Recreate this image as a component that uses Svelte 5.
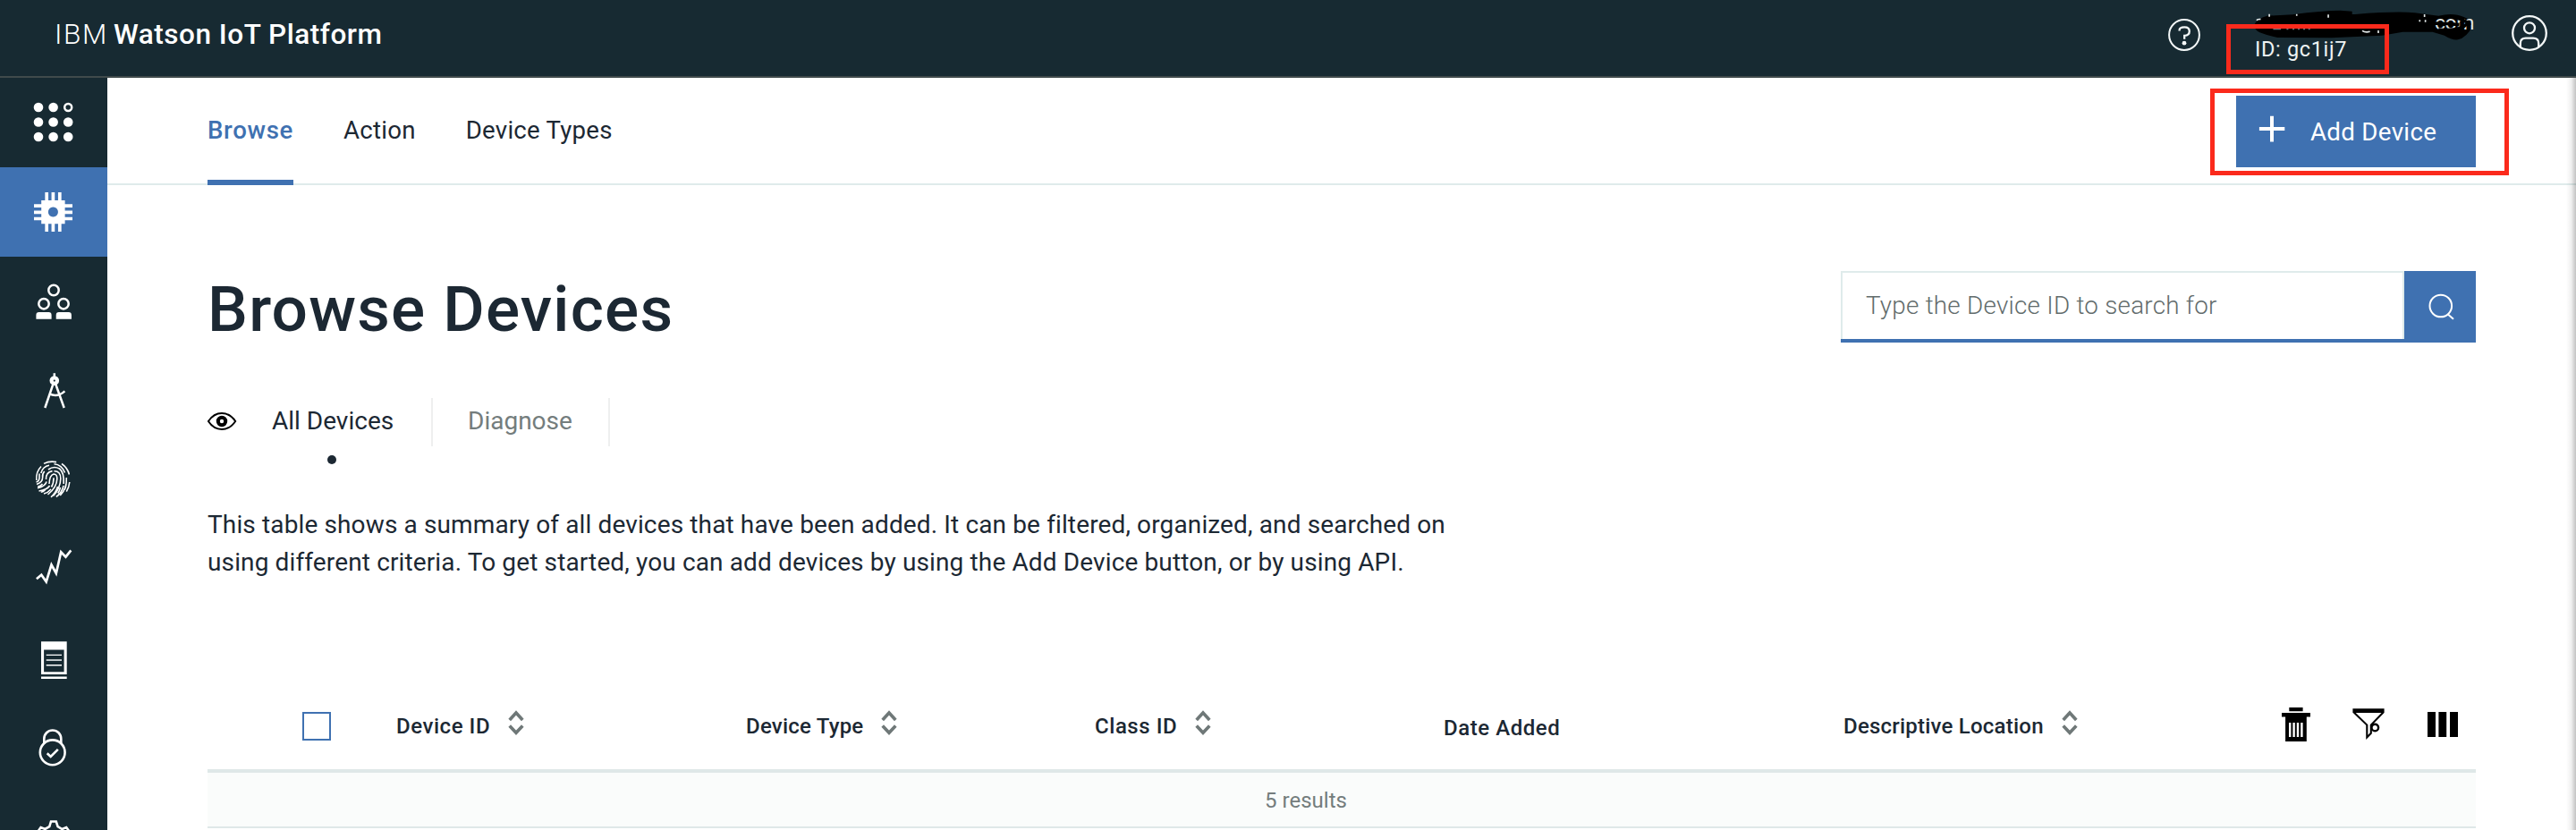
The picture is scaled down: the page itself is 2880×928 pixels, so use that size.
<script>
  const tabs = [
    { label: 'Browse', active: true },
    { label: 'Action', active: false },
    { label: 'Device Types', active: false }
  ];
  const columns = [
    { label: 'Device ID', sortable: true, cls: 'wide' },
    { label: 'Device Type', sortable: true, cls: 'tight' },
    { label: 'Class ID', sortable: true, cls: 'wide' },
    { label: 'Date Added', sortable: false, cls: 'wide low' },
    { label: 'Descriptive Location', sortable: true, cls: 'tight' }
  ];
  const dots = [43, 59.6, 76.2].flatMap((x) => [120, 136.5, 153].map((y) => ({ x, y })));
</script>

<div class="app">
  <header>
    <div class="brand"><span class="ibm">IBM</span><span class="product">Watson IoT Platform</span></div>
    <svg class="help" viewBox="2422 19 40 40" width="40" height="40" fill="none" stroke="#f4f8f8" stroke-width="2">
      <circle cx="2442" cy="39" r="16.9" />
      <path d="M2436.6 34.6v-.8q0-3.4 5.6-3.4t5.6 4.5q0 4.6-5.6 5v3.8" stroke-width="2.3" />
      <circle cx="2442" cy="48.2" r="2.4" fill="#f4f8f8" stroke="none" />
    </svg>
    <div class="account">
      <span>ID: gc1ij7</span>
      <svg class="scribble" viewBox="40 20 800 130" width="266.7" height="43.3">
        <path d="M62 82Q70 62 105 52L190 48Q290 34 350 34L390 37V50L345 48L400 47Q540 36 600 42L680 52Q730 40 765 56Q800 70 795 85Q775 125 745 132Q725 134 700 118L660 106L560 106L490 118L320 126L140 125Q105 118 80 108Q62 100 62 82Z" />
        <g stroke="#e4eaea" stroke-width="5" fill="none">
          <path d="M69 67q7-5 14-3M112 46v9M204 46v6M310 48v10M633 47v9M636 66v7M617 66v6" />
          <path d="M424 102q10 7 26 3M478 101v9" />
          <path d="M125 97h26M170 97h6M190 97h6M208 97h6M226 97h6M243 97h6" stroke="#69757a" stroke-width="4" />
        </g>
        <text x="667" y="97" font-size="69" textLength="134" fill="#dfe5e5">com</text>
        <path d="M640 78Q700 76 750 82M680 98Q750 106 778 78M700 56Q760 54 786 84" fill="none" stroke="#000" stroke-width="11" />
      </svg>
    </div>
    <svg viewBox="2808 17 40 40" width="40" height="40" fill="none" stroke="#f4f8f8" stroke-width="2.3">
      <circle cx="2828" cy="37" r="18.8" />
      <circle cx="2828" cy="31.3" r="6" />
      <path d="M2817.8 52.5v-4q0-5.8 6-5.8h8.4q6 0 6 5.8v4" />
    </svg>
    <i class="mark mark-id"></i>
  </header>

  <div class="body">
    <aside>
      <svg viewBox="0 87 120 100" fill="#fff">
        {#each dots as d}
          {#if d.x > 70 && d.y < 130}
            <circle cx={d.x} cy={d.y} r="4" fill="none" stroke="#fff" stroke-width="2.5" />
          {:else}
            <circle cx={d.x} cy={d.y} r="5.3" />
          {/if}
        {/each}
      </svg>
      <svg class="active" viewBox="0 187 120 100" fill="#fff">
        <path fill-rule="evenodd" d="M46.2 223.9h26.4v26.4H46.2zM59.4 231.6a5.5 5.5 0 1 0 .01 0z" />
        <path d="M52.2 215v10M59.4 215v10M66.8 215v10M52.2 249v10M59.4 249v10M66.8 249v10M38 230.1h10M38 237.3h10M38 244.5h10M71 230.1h10M71 237.3h10M71 244.5h10" stroke="#fff" stroke-width="3.7" />
      </svg>
      <svg viewBox="0 287 120 100" fill="none" stroke="#fff" stroke-width="2.5">
        <circle cx="60" cy="324.5" r="5.7" /><circle cx="49" cy="339.7" r="5.7" /><circle cx="71" cy="339.7" r="5.7" />
        <path fill="#fff" stroke="none" d="M40.4 356.7v-4.4q0-3.2 3.2-3.2h10.8q3.2 0 3.2 3.2v4.4zM62.7 356.7v-4.4q0-3.2 3.2-3.2h10.8q3.2 0 3.2 3.2v4.4z" />
      </svg>
      <svg viewBox="0 387 120 100" fill="none" stroke="#fff" stroke-width="2.5">
        <path d="M60.8 417.3v5M59.2 430L50.3 456M62.4 430L71.7 456M55 440.2Q64 445 72.4 437.4" />
        <circle cx="60.8" cy="425.6" r="3.2" stroke-width="4.2" />
      </svg>
      <svg viewBox="0 487 120 100" fill="none" stroke="#fff" stroke-width="1.6">
        <path d="M49 518.4Q55.5 515 63 516.6M69 518.5Q75.5 523 77.4 530.5M60.5 518.8Q69 519.5 72.5 528.5M45.8 529Q48 521.5 55 520.3M40.8 537Q40 527.5 46 521.5" />
        <path d="M54 525Q60 520.5 66.5 524Q71.8 528 71.2 541M60.5 526.8Q67.8 526.5 67.8 535Q67.6 546 59.5 554.5M51.5 536Q51 528 58.5 526.6M55 541Q55.5 531 60 530Q64 530 63.8 535.5Q63.5 545 53.5 553M60 534.2Q60 540.5 57.5 544.5" />
        <path d="M49.7 527Q47 530 47.6 534Q47.6 539 41 541.5M44 529.5V534Q44 538 40.5 539M52 538.5Q51 543.5 42 545.8M47.5 541Q46 543 42.2 544.2M55.6 543Q53 547.3 43.5 549M57 547Q53.5 551 49 552M50.5 547.8Q48.5 550 45.8 550.2M64.5 544Q62.5 551 57 555.8M71 543Q69.3 551 62.8 555.5M67.5 545Q66.5 549 64.8 551.5M74.3 534Q75 546 67.3 554M77.8 539Q77.2 545 74.3 549.7M74 541.5Q73.5 545 72.3 547.5" />
      </svg>
      <svg viewBox="0 587 120 100" fill="none" stroke="#fff" stroke-width="2.7">
        <path d="M40.9 647.2L46.3 642.7L51.7 650.5L57.5 631.5L62.8 641L68.2 617.2L73.5 622.6L79.3 615.4" />
      </svg>
      <svg viewBox="0 687 120 100" fill="#fff">
        <path fill-rule="evenodd" d="M46 717.3h28.7V754H46zM49.1 726.4v24.9h22.5v-24.9z" />
        <path d="M46 756.6h28.7v2.4H46zM51.7 731.7H69v1.4H51.7zM51.7 743.1H69v1.4H51.7z" />
        <path d="M51.7 737.1H69v1.9H51.7z" fill="#c8cdcf" />
      </svg>
      <svg viewBox="0 787 120 100" fill="none" stroke="#fff" stroke-width="2.6">
        <circle cx="58.7" cy="841.3" r="13.9" />
        <path d="M49.3 831.8V826a9.5 9.5 0 0 1 19 0V831.8M52.7 842.2L56.7 846L64.8 837.8" />
      </svg>
      <svg viewBox="0 887 120 100" fill="none" stroke="#fff" stroke-width="2.6">
        <path d="M42.5 929.5L45.6 925L50.4 927L55.3 924.2L57 918.5H62.8L64.6 924.2L69.4 927L74.2 925L77.4 929.5L73 934V941L77.4 945L74 950L55 957L45 950L42.5 945L47 941V934Z" />
      </svg>
    </aside>

    <main>
      <nav>
        {#each tabs as t}
          <a class:active={t.active}>{t.label}</a>
        {/each}
        <button class="add">
          <svg viewBox="0 0 30 30" width="30" height="30" stroke="#fff" stroke-width="4"><path d="M.9 15h28.4M15 .8v28.6" /></svg>
          Add Device
          <i class="mark mark-add"></i>
        </button>
      </nav>

      <section>
        <div class="title">
          <h1>Browse Devices</h1>
          <div class="search">
            <div class="field">Type the Device ID to search for</div>
            <div class="go">
              <svg viewBox="2708 323 40 40" width="40" height="40" fill="none" stroke="#fff" stroke-width="2"><circle cx="2728.8" cy="342" r="12.3" /><path d="M2736.6 351.2L2743 356.8" /></svg>
            </div>
          </div>
        </div>

        <div class="views">
          <svg viewBox="232 459 33 24" width="33" height="24">
            <path d="M232.9 471Q239 462 248 462T263.2 471Q257 480 248 480T232.9 471Z" fill="none" stroke="#000" stroke-width="2" />
            <circle cx="248" cy="471" r="4.2" fill="#fff" stroke="#000" stroke-width="4" />
          </svg>
          <span class="view current">All Devices</span>
          <span class="view">Diagnose</span>
        </div>

        <p>This table shows a summary of all devices that have been added. It can be filtered, organized, and searched on<br />using different criteria. To get started, you can add devices by using the Add Device button, or by using API.</p>

        <div class="table">
          <div class="head">
            <span></span>
            <span class="check"></span>
            {#each columns as c}
              <div class="col {c.cls}">
                {c.label}
                {#if c.sortable}
                  <svg viewBox="0 0 18 28" width="18" height="28" fill="none" stroke="#6f7878" stroke-width="3.6"><path d="M1.7 11L9 3L16.3 11M1.7 17.5L9 25.3L16.3 17.5" /></svg>
                {/if}
              </div>
            {/each}
            <div class="tools">
              <svg viewBox="2551 791 32 38" width="32" height="38">
                <path fill-rule="evenodd" d="M2559.3 791h15.3v4.3h-15.3zM2551 797h32v4.4h-4.2V829h-23.7v-27.6H2551zM2559 808v16h2.4v-16zM2563.4 808v16h2.4v-16zM2567.8 808v16h2.4v-16zM2572.2 808v16h2.4v-16z" />
              </svg>
              <svg viewBox="2630 793 36 36" width="36" height="36">
                <path d="M2630.4 793.3h35.2v4.7h-35.2z" />
                <path d="M2631.7 797.5L2646.3 811.6V825.5L2650.8 820.8V811.6L2664.5 797.5" fill="none" stroke="#000" stroke-width="2.1" />
                <circle cx="2655.3" cy="814.5" r="3.8" fill="#fff" stroke="#000" stroke-width="2.4" />
              </svg>
              <svg viewBox="2714 797 34 28" width="34" height="28"><path d="M2714 797h9v28h-9zM2726.4 797h8.8v28h-8.8zM2739 797h9v28h-9z" /></svg>
            </div>
          </div>
          <div class="count">5 results</div>
        </div>
      </section>
    </main>
  </div>
</div>

<style>
  :global(body) { background: #fff; overflow: hidden; }
  .app { width: 2880px; height: 928px; overflow: hidden; font-family: Roboto, sans-serif; color: #1c2833; display: flex; flex-direction: column; }
  svg { display: block; flex: none; }
  header { position: relative; box-sizing: border-box; flex: none; height: 87px; display: flex; background: #172a32; border-bottom: 2px solid #404a4b; padding: 0 32px 0 61px; color: #fff; }
  .brand { flex: 1; display: flex; line-height: 77px; font-size: 31.5px; white-space: nowrap; }
  .ibm { width: 66px; font-weight: 300; letter-spacing: 1.7px; }
  .product { font-weight: 500; letter-spacing: .53px; }
  .help { margin: 19px 59px 0 0; }
  .account { position: relative; width: 287px; padding-top: 40px; box-sizing: border-box; font-size: 23.5px; line-height: 30px; letter-spacing: .65px; color: #eef3f3; }
  .scribble { position: absolute; left: -8px; top: 6.7px; }
  header > svg:last-of-type { margin-top: 17px; }
  .mark { position: absolute; box-sizing: border-box; border: 5px solid #fb2a1c; }
  .mark-id { left: 2489px; top: 27px; width: 182px; height: 56px; }
  .mark-add { left: -29px; top: -8px; width: 334px; height: 97px; }

  .body { flex: 1; min-height: 0; display: flex; }
  aside { width: 120px; flex: none; background: #172a32; overflow: hidden; }
  aside svg { width: 120px; height: 100px; }
  aside .active { background: #3f71b1; }
  main { position: relative; flex: 1; overflow: hidden; }
  main::after { content: ''; position: absolute; right: 0; top: 0; bottom: 0; width: 11px; background: linear-gradient(to right, rgba(0,0,0,0), rgba(0,0,0,.06) 50%, rgba(0,0,0,.24)); }

  nav { height: 120px; box-sizing: border-box; border-bottom: 2px solid #dfebeb; display: flex; gap: 56px; padding: 0 112px; }
  nav a { box-sizing: border-box; height: 120px; line-height: 117px; font-size: 27.6px; letter-spacing: .25px; white-space: nowrap; }
  nav a.active { color: #3f71b1; font-weight: 500; letter-spacing: .68px; border-bottom: 6px solid #3f71b1; }
  .add { position: relative; margin: 20px 0 0 auto; width: 268px; height: 80px; display: flex; align-items: center; gap: 28px; padding: 1px 0 0 25px; border: 0; background: #3f71b1; color: #fff; font: 400 27.7px Roboto, sans-serif; letter-spacing: .3px; white-space: nowrap; }
  .add svg { margin-top: -8px; }

  section { padding: 96px 112px 0; }
  .title { display: flex; justify-content: space-between; height: 80px; }
  h1 { margin: 0; font-size: 71.2px; font-weight: 500; line-height: 86px; letter-spacing: 1.2px; white-space: nowrap; }
  .search { width: 710px; display: flex; border-bottom: 4px solid #3f71b1; box-sizing: border-box; }
  .field { flex: 1; box-sizing: border-box; border: 2px solid #dfebeb; border-bottom: 0; padding-left: 26px; font-size: 27.8px; font-weight: 300; letter-spacing: .25px; line-height: 73px; color: #626c6c; }
  .go { width: 80px; background: #3f71b1; display: flex; justify-content: center; align-items: flex-start; padding-top: 20px; box-sizing: border-box; }

  .views { display: flex; align-items: center; margin-top: 62px; height: 54px; font-size: 28px; }
  .views svg { margin-top: -2px; }
  .view { position: relative; box-sizing: border-box; height: 54px; line-height: 52px; color: #747d7d; border-right: 2px solid #eeefef; padding: 0 41px 0 39px; width: 198px; white-space: nowrap; }
  .view.current { width: 219px; padding-left: 39px; color: #1c2833; }
  .current::after { content: ''; position: absolute; left: 101px; top: 64px; width: 10px; height: 10px; border-radius: 50%; background: #1c2833; }
  p { margin: 67px 0 0; font-size: 28px; line-height: 42px; letter-spacing: .13px; white-space: nowrap; }

  .table { margin-top: 114px; }
  .head { box-sizing: border-box; height: 100px; border-bottom: 4px solid #dfe8e8; display: grid; grid-template-columns: 106px 105px 391px 390px 390px 447px 330px 1fr; align-items: center; }
  .check { box-sizing: border-box; width: 32px; height: 32px; border: 2px solid #3f71b1; }
  .col { display: flex; align-items: center; gap: 20px; font-size: 24px; font-weight: 500; white-space: nowrap; }
  .col svg { margin-top: -8px; }
  .wide { letter-spacing: .55px; }
  .tight { letter-spacing: .22px; }
  .low { padding-top: 4px; }
  .tools { display: flex; align-items: center; justify-content: flex-end; padding-right: 20px; margin-top: -4px; }
  .tools svg + svg { margin-left: 47px; }
  .tools svg:last-child { margin-left: 48px; }
  .count { height: 60px; line-height: 63px; padding-right: 80px; border-bottom: 2px solid #dfe8e8; background: #fafcfb; text-align: center; font-size: 24px; color: #747d7d; }
</style>
